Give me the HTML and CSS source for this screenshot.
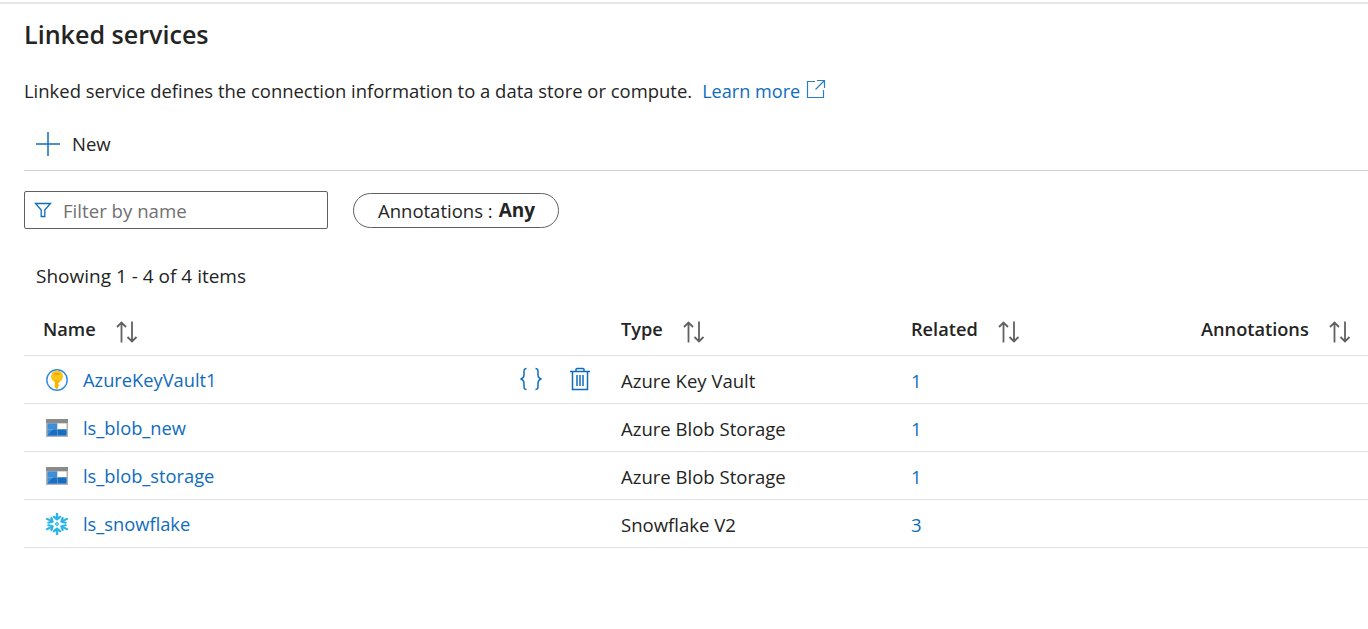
FILE: index.html
```html
<!DOCTYPE html>
<html lang="en">
<head>
<meta charset="utf-8">
<title>Linked services</title>
<link rel="stylesheet" href="styles.css">
</head>
<body>
<main class="page">
  <h1 class="title">Linked services</h1>
  <p class="intro">
    <span>Linked service defines the connection information to a data store or compute.</span>
    <a class="link learn" href="#">Learn more
      <svg class="ext" viewBox="0 0 20 20" width="20" height="20"><path d="M9 2.500H1.500v16h16V11M11 1.500h7.500V9M18.500 1.500 9.500 10.500"/></svg>
    </a>
  </p>
  <div class="toolbar">
    <button class="new"><svg viewBox="0 0 24 24" width="24" height="24"><path class="plus" d="M12 0v24M0 12h24"/></svg><span>New</span></button>
  </div>
  <div class="filters">
    <label class="search">
      <svg viewBox="0 0 18 18" width="18" height="18"><path class="funnel" d="M1.500 2.500h15L10.800 9v6.500H7.200V9z"/></svg>
      <span class="placeholder">Filter by name</span>
    </label>
    <div class="pill">Annotations : <b>Any</b></div>
  </div>
  <div class="count">Showing 1 - 4 of 4 items</div>
  <div class="table">
    <div class="row head">
      <div class="cell c1"><span class="label">Name</span><svg class="sort" viewBox="0 0 22 22" width="22" height="22"><use href="#sort"/></svg></div>
      <div class="cell c2"><span class="label">Type</span><svg class="sort" viewBox="0 0 22 22" width="22" height="22"><use href="#sort"/></svg></div>
      <div class="cell c3"><span class="label">Related</span><svg class="sort" viewBox="0 0 22 22" width="22" height="22"><use href="#sort"/></svg></div>
      <div class="cell c4"><span class="label">Annotations</span><svg class="sort" viewBox="0 0 22 22" width="22" height="22"><use href="#sort"/></svg></div>
    </div>
    <div class="row">
      <div class="cell c1 name">
        <svg class="ico" viewBox="0 0 22 22" width="22" height="22"><circle cx="11" cy="11" r="10.200" fill="#fff" stroke="#2f8be0" stroke-width="1.400"/><circle cx="11" cy="7.500" r="6" fill="#fcc419"/><path d="M8.800 11h4.400v3h-1v1.500h1v1.500h-1v1.500L11 20.500 8.800 18.500z" fill="#f7b500"/><path d="M8.500 4.200h5v1.600h-5z" fill="#e8a200"/></svg>
        <a class="link" href="#">AzureKeyVault1</a>
        <span class="actions">
          <svg class="braces" viewBox="0 0 24 24" width="24" height="24"><path d="M7.500 1.500C4.500 1.500 5 4 5 7.500 5 10 4.500 11.500 1.500 12 4.500 12.500 5 14 5 16.500 5 20 4.500 22.500 7.500 22.500M16.500 1.500C19.500 1.500 19 4 19 7.500 19 10 19.500 11.500 22.500 12 19.500 12.500 19 14 19 16.500 19 20 19.500 22.500 16.500 22.500"/></svg>
          <svg class="trash" viewBox="0 0 22 24" width="22" height="24"><path d="M1 4.500h20M7 4.500V2.500q0-1 1-1h6q1 0 1 1v2M3.500 4.500V22.500h15V4.500M8 8v11M11 8v11M14 8v11"/></svg>
        </span>
      </div>
      <div class="cell c2">Azure Key Vault</div>
      <div class="cell c3"><a class="link" href="#">1</a></div>
    </div>
    <div class="row">
      <div class="cell c1 name">
        <svg class="ico" viewBox="0 0 22 22" width="22" height="22"><use href="#blob"/></svg>
        <a class="link" href="#">ls_blob_new</a>
      </div>
      <div class="cell c2">Azure Blob Storage</div>
      <div class="cell c3"><a class="link" href="#">1</a></div>
    </div>
    <div class="row">
      <div class="cell c1 name">
        <svg class="ico" viewBox="0 0 22 22" width="22" height="22"><use href="#blob"/></svg>
        <a class="link" href="#">ls_blob_storage</a>
      </div>
      <div class="cell c2">Azure Blob Storage</div>
      <div class="cell c3"><a class="link" href="#">1</a></div>
    </div>
    <div class="row">
      <div class="cell c1 name">
        <svg class="ico" viewBox="0 0 22 22" width="22" height="22"><g fill="none" stroke="#29b5e8" stroke-width="2.100" stroke-linecap="round" stroke-linejoin="round" transform="translate(11 11) scale(1.12 1) translate(-11 -11)"><use href="#arm"/><use href="#arm" transform="rotate(60 11 11)"/><use href="#arm" transform="rotate(120 11 11)"/><use href="#arm" transform="rotate(180 11 11)"/><use href="#arm" transform="rotate(240 11 11)"/><use href="#arm" transform="rotate(300 11 11)"/></g><path d="M11 9.300 12.700 11 11 12.700 9.300 11z" fill="none" stroke="#29b5e8" stroke-width="1.100"/></svg>
        <a class="link" href="#">ls_snowflake</a>
      </div>
      <div class="cell c2">Snowflake V2</div>
      <div class="cell c3"><a class="link" href="#">3</a></div>
    </div>
  </div>
</main>
<svg class="defs" width="0" height="0" aria-hidden="true"><defs>
  <g id="blob"><rect x="0" y="2" width="22" height="18" fill="#b3b3b3"/><rect x="0" y="2" width="22" height="4" fill="#8a8a8a"/><rect x="1.500" y="6.500" width="9.500" height="5.500" fill="#3a8fdc"/><rect x="11.500" y="6.500" width="9" height="5.500" fill="#fff"/><rect x="1.500" y="12.500" width="9.500" height="6" fill="#3a8fdc"/><path d="M1.500 18.500 7 12.500h4v6z" fill="#1a6fc0"/><rect x="11.500" y="12.500" width="9" height="6" fill="#0f6fc6"/></g>
  <g id="sort"><path d="M5.500 21.500V1.500M1 6 5.500 1.500 10 6M16 .5v20M11.500 16 16 20.500 20.500 16"/></g>
  <path id="arm" d="M11 .8v5.600M8.300 3.700 11 6.400l2.700-2.700"/>
</defs></svg>
</body>
</html>
```
FILE: styles.css
```css
* { box-sizing: border-box; }
html, body { margin: 0; padding: 0; background: #fff; overflow: hidden; }
body { font-family: "Open Sans", "Liberation Sans", sans-serif; color: #242424; height: 629px; }
.page { border-top: 2px solid #e6e6e6; margin-top: 2px; padding-left: 24px; }
.defs { position: absolute; }
.title { margin: 14px 0 0; font-size: 25.100px; font-weight: 600; line-height: 32px; height: 32px; }
.intro { margin: 27px 0 0; font-size: 18.440px; line-height: 28px; height: 28px; display: flex; gap: 10px; white-space: nowrap; }
.link { color: #0f6cbd; text-decoration: none; }
.learn { display: inline-flex; gap: 6px; align-items: flex-start; font-size: 18.100px; }
.ext { fill: none; stroke: #2a7dc9; stroke-width: 1.200; margin-top: 2px; }
.toolbar { margin-top: 12px; height: 54px; border-bottom: 1px solid #d1d1d1; display: flex; align-items: center; }
.new { background: none; border: 0; padding: 0 0 0 12px; font: inherit; font-size: 18.500px; color: #242424; display: flex; align-items: center; gap: 12px; }
.plus { stroke: #0f6cbd; stroke-width: 1.500; fill: none; }
.filters { display: flex; align-items: center; margin-top: 20px; gap: 25px; }
.search { width: 304px; height: 38px; border: 1px solid #616161; border-radius: 2px; display: flex; align-items: center; gap: 11px; padding-left: 9px; }
.funnel { fill: none; stroke: #0f6cbd; stroke-width: 1.300; }
.placeholder { font-size: 18.650px; color: #707070; }
.pill { height: 35px; border: 1px solid #616161; border-radius: 18px; font-size: 18.500px; padding: 0 23px 0 24px; display: flex; align-items: center; gap: 6px; white-space: nowrap; }
.pill b { font-weight: 700; font-size: 19px; }
.count { margin: 33px 0 0 12px; font-size: 19px; line-height: 28px; }
.table { margin-top: 18px; width: 1344px; }
.row { display: grid; grid-template-columns: 597px 290px 290px 167px; height: 48px; border-bottom: 1px solid #e0e0e0; align-items: center; font-size: 18.550px; }
.head { font-size: 18.200px; font-weight: 600; }
.cell { display: flex; align-items: center; white-space: nowrap; }
.c1 { padding-left: 19px; }
.c2 { padding-top: 2px; }
.c3 { padding-top: 2px; }
.head .c2, .head .c3 { padding-top: 0; }
.label { margin-bottom: 6px; }
.sort { fill: none; stroke: #616161; stroke-width: 1.800; margin-left: 20px; flex: none; }
.name { padding-left: 22px; position: relative; font-size: 18.300px; }
.ico { margin-right: 15px; flex: none; }
.actions { position: absolute; left: 495px; top: 0; display: flex; gap: 26px; align-items: center; height: 24px; }
.braces, .trash { fill: none; stroke: #0f6cbd; stroke-width: 1.500; }
```
